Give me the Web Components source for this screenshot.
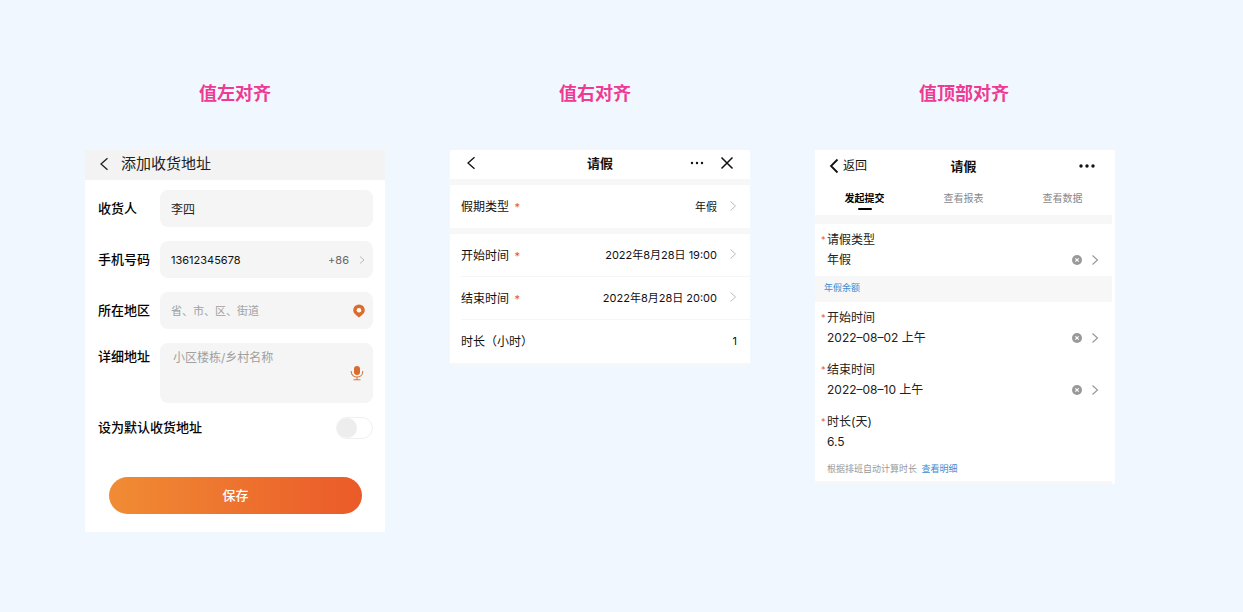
<!DOCTYPE html>
<html lang="zh-CN">
<head>
<meta charset="utf-8">
<meta name="viewport" content="width=device-width, initial-scale=1">
<title>表单值对齐方式</title>
<style>
  body { margin: 0; min-height: 100vh; background: #f0f7ff; font-family: Inter, "Noto Sans CJK SC", sans-serif; color: #222; }
</style>
</head>
<body>
<align-board></align-board>

<script>
const CONTROL_RESET = `
  *, *::before, *::after { box-sizing: border-box; }
  button, input, textarea { font: inherit; color: inherit; border: 0; margin: 0; padding: 0; background: none; }
  button { cursor: pointer; text-align: inherit; }
  svg { display: block; fill: none; stroke: currentColor; }
  h2 { margin: 0; }
  a { color: inherit; text-decoration: none; }
`;

class BaseElement extends HTMLElement {
  constructor() {
    super();
    this.attachShadow({ mode: "open" });
  }
  connectedCallback() {
    this.shadowRoot.innerHTML = `<style>${CONTROL_RESET}${this.styles()}</style>${this.markup()}`;
  }
  attr(name) { return this.getAttribute(name) || ""; }
  styles() { return ""; }
  markup() { return ""; }
}

/* Line icons, coloured by the current text colour */
const ICONS = {
  "back": [10, 14, `<path d="M8.500 1.200 2 7l6.500 5.800" stroke-width="1.300"/>`],
  "back-bold": [10, 16, `<path d="M8.500 1.500 2 8l6.500 6.500" stroke-width="1.800"/>`],
  "next": [8, 12, `<path d="m1.500 1.500 5 4.500-5 4.500" stroke-width="1"/>`],
  "next-small": [6, 10, `<path d="m1 1.500 4 3.500-4 3.500" stroke-width="1"/>`],
  "next-bold": [8, 12, `<path d="m1.500 1.500 5 4.500-5 4.500" stroke-width="1.200"/>`],
  "more": [14, 4, `<g fill="currentColor" stroke="none"><circle cx="2" cy="2" r="1.200"/><circle cx="7" cy="2" r="1.200"/><circle cx="12" cy="2" r="1.200"/></g>`],
  "more-bold": [20, 4, `<g fill="currentColor" stroke="none"><circle cx="3" cy="2" r="1.700"/><circle cx="9" cy="2" r="1.700"/><circle cx="15" cy="2" r="1.700"/></g>`],
  "close": [14, 14, `<path d="m1.500 1.500 11 11m0-11-11 11" stroke-width="1.500"/>`],
  "clear": [10, 10, `<circle cx="5" cy="5" r="5" fill="#999" stroke="none"/><path d="m3.300 3.300 3.400 3.400m0-3.400L3.300 6.700" stroke="#fff" stroke-width="1.100"/>`],
  "pin": [12, 14, `<path d="M6 13.500C4.500 11.800.2 9.800.2 6.200a5.800 5.800 0 0 1 11.600 0c0 3.600-4.300 5.600-5.800 7.300Z" fill="#dd6b2c" stroke="none"/><circle cx="6" cy="6.300" r="2.300" fill="#fff" stroke="none"/>`],
  "mic": [14, 16, `<rect x="4" y="1" width="6" height="9" rx="3" fill="#d96c2f" stroke="none"/><path d="M1.300 6v1c0 3 2.500 5 5.700 5s5.700-2 5.700-5V6M7 12v2.500M3.500 14.700h7" stroke="#d9783f" stroke-width="1.100"/>`]
};
customElements.define("line-icon", class extends BaseElement {
  styles() { return `:host { display: block; flex: none; }`; }
  markup() {
    const [w, h, body] = ICONS[this.attr("name")];
    return `<svg width="${w}" height="${h}" viewBox="0 0 ${w} ${h}" aria-hidden="true">${body}</svg>`;
  }
});

customElements.define("phone-screen", class extends BaseElement {
  styles() { return `:host { display: block; background: #fff; min-width: 0; }`; }
  markup() { return `<slot></slot>`; }
});

/* Grey band between groups of rows */
customElements.define("group-band", class extends BaseElement {
  styles() { return `
    :host { display: block; height: 6px; background: #f7f7f7; }
    :host([size="large"]) { height: 9px; }
    :host([size="small"]) { height: 3px; }`; }
});

/* Row with the label in front and the filled box behind */
customElements.define("boxed-field", class extends BaseElement {
  styles() { return `
    :host { display: grid; grid-template-columns: 62px minmax(0, 1fr); align-items: center; }
    :host([multiline]) { align-items: start; }
    label { padding-bottom: 2px; font-size: 13px; font-weight: 500; line-height: 26px; color: #000; }
    .box { display: flex; align-items: center; height: 37px; padding: 0 8px 0 11px; border-radius: 8px; background: #f5f5f5; }
    :host([multiline]) .box { height: 60px; padding: 0 9px 0 13px; }
    input, textarea { flex: 1; min-width: 0; outline: 0; font-size: 12px; resize: none; }
    input[type="tel"] { font-size: 11px; color: #111; }
    textarea { height: 60px; padding-top: 5px; line-height: 20px; }
    ::placeholder { color: #a0a0a0; opacity: 1; }
    input::placeholder { font-size: 11px; }
  `; }
  markup() {
    const control = this.hasAttribute("multiline")
      ? `<textarea id="c" placeholder="${this.attr("placeholder")}"></textarea>`
      : `<input id="c" type="${this.attr("type") || "text"}" value="${this.attr("value")}" placeholder="${this.attr("placeholder")}">`;
    return `<label for="c">${this.attr("label")}</label><div class="box">${control}<slot></slot></div>`;
  }
});

customElements.define("toggle-field", class extends BaseElement {
  styles() { return `
    :host { display: flex; align-items: center; justify-content: space-between; }
    label { padding-bottom: 2px; font-size: 13px; font-weight: 500; line-height: 20px; color: #000; }
    input { appearance: none; width: 37px; height: 22px; border: 1px solid #f0f0f0; border-radius: 11px; background: #fff; cursor: pointer; }
    input::before { content: ""; display: block; width: 20px; height: 20px; border-radius: 10px; background: #ededed; }
    input:checked { background: #ec6a2c; }
    input:checked::before { margin-left: auto; }
  `; }
  markup() { return `<label for="c">${this.attr("label")}</label><input id="c" type="checkbox" role="switch">`; }
});

customElements.define("address-form", class extends BaseElement {
  styles() { return `
    :host { display: block; }
    header { display: flex; align-items: center; gap: 12px; height: 30px; padding: 0 14px 3px; background: #f3f3f3; }
    h2 { font-size: 15px; font-weight: 400; line-height: 27px; }
    form { display: flex; flex-direction: column; gap: 14px; padding: 10px 12px 18px 13px; }
    .code { display: flex; align-items: center; gap: 10px; font-size: 11px; color: #666; }
    .code line-icon { color: #bbb; }
    .save { height: 37px; margin: 24px 11px 0; padding-bottom: 2px; border-radius: 19px; background: linear-gradient(90deg, #f08c34, #eb5a29); color: #fff; font-size: 13px; font-weight: 500; text-align: center; }
  `; }
  markup() { return `
    <phone-screen>
      <header><button aria-label="返回"><line-icon name="back"></line-icon></button><h2>添加收货地址</h2></header>
      <form onsubmit="return false">
        <boxed-field label="收货人" value="李四"></boxed-field>
        <boxed-field label="手机号码" type="tel" value="13612345678"><button type="button" class="code">+86<line-icon name="next-small"></line-icon></button></boxed-field>
        <boxed-field label="所在地区" placeholder="省、市、区、街道"><button type="button" aria-label="定位"><line-icon name="pin"></line-icon></button></boxed-field>
        <boxed-field label="详细地址" placeholder="小区楼栋/乡村名称" multiline><button type="button" aria-label="语音输入"><line-icon name="mic"></line-icon></button></boxed-field>
        <toggle-field label="设为默认收货地址"></toggle-field>
        <button class="save">保存</button>
      </form>
    </phone-screen>`; }
});

/* Row with the value pushed to the right edge */
customElements.define("inline-field", class extends BaseElement {
  styles() { return `
    :host { display: flex; align-items: center; justify-content: space-between; box-sizing: border-box; height: 43px; margin-left: 11px; padding: 0 13px 2px 0; color: #111; }
    :host([divided]) { border-bottom: 1px solid #f5f5f5; }
    .label { font-size: 12px; }
    .required { margin-left: 2px; color: #e5533d; font-size: 11px; }
    button, output { display: flex; align-items: center; gap: 12px; font-size: 11px; }
    line-icon { color: #bbb; }
  `; }
  markup() {
    const star = this.hasAttribute("required") ? ` <span class="required">*</span>` : "";
    const value = this.hasAttribute("readonly")
      ? `<output aria-labelledby="l">${this.attr("value")}</output>`
      : `<button type="button" aria-labelledby="l v"><span id="v">${this.attr("value")}</span><line-icon name="next"></line-icon></button>`;
    return `<span class="label" id="l">${this.attr("label")}${star}</span>${value}`;
  }
});

customElements.define("leave-inline", class extends BaseElement {
  styles() { return `
    :host { display: block; }
    header { display: grid; grid-template-columns: 1fr auto 1fr; align-items: center; height: 29px; padding: 0 16px 3px; color: #111; }
    h2 { font-size: 13px; font-weight: 700; line-height: 26px; }
    .tools { display: flex; justify-content: flex-end; align-items: center; gap: 16px; }
  `; }
  markup() { return `
    <phone-screen>
      <header>
        <button aria-label="返回"><line-icon name="back"></line-icon></button>
        <h2>请假</h2>
        <div class="tools"><button aria-label="更多"><line-icon name="more"></line-icon></button><button aria-label="关闭"><line-icon name="close"></line-icon></button></div>
      </header>
      <group-band></group-band>
      <inline-field label="假期类型" value="年假" required></inline-field>
      <group-band></group-band>
      <inline-field label="开始时间" value="2022年8月28日 19:00" required divided></inline-field>
      <inline-field label="结束时间" value="2022年8月28日 20:00" required divided></inline-field>
      <inline-field label="时长（小时）" value="1" readonly></inline-field>
      <group-band size="small"></group-band>
    </phone-screen>`; }
});

/* Row with the label on top of the value */
customElements.define("stacked-field", class extends BaseElement {
  styles() { return `
    :host { display: block; padding: 6px 13px 6px 6px; font-size: 12px; line-height: 20px; color: #222; }
    .label { display: grid; grid-template-columns: 6px 1fr; }
    .required { color: #e5533d; font-size: 9px; }
    .value { display: flex; align-items: center; gap: 9px; padding-left: 6px; height: 20px; }
    .pick { flex: 1; }
    .open { color: #999; }
  `; }
  markup() {
    const body = this.hasAttribute("readonly")
      ? `<output aria-labelledby="l">${this.attr("value")}</output>`
      : `<button type="button" class="pick" id="v" aria-labelledby="l v">${this.attr("value")}</button>
         <button type="button" aria-label="清除"><line-icon name="clear"></line-icon></button>
         <button type="button" class="open" aria-label="选择"><line-icon name="next-bold"></line-icon></button>`;
    return `<div class="label"><span class="required">*</span><span id="l">${this.attr("label")}</span></div><div class="value">${body}</div>`;
  }
});

customElements.define("leave-stacked", class extends BaseElement {
  styles() { return `
    :host { display: block; }
    .content { margin-right: 3px; }
    header { display: grid; grid-template-columns: 1fr auto 1fr; align-items: center; height: 33px; padding: 0 14px 1px; color: #111; }
    .back { display: flex; align-items: center; gap: 4px; font-size: 12px; line-height: 20px; }
    h2 { font-size: 13px; font-weight: 700; line-height: 20px; }
    .more { justify-self: end; }
    nav { display: grid; grid-template-columns: repeat(3, 1fr); height: 32px; padding-top: 5px; font-size: 10px; line-height: 20px; color: #888; }
    nav a { display: flex; flex-direction: column; align-items: center; }
    nav a[aria-current] { color: #000; font-weight: 700; }
    nav a[aria-current]::after { content: ""; width: 14px; height: 2px; border-radius: 1px; background: #000; }
    .balance { height: 26px; padding-left: 9px; background: #f7f7f7; font-size: 9px; line-height: 24px; }
    a.link { color: #3d8bd0; }
    .note { margin: 0; padding: 1px 0 2px 12px; font-size: 9px; line-height: 20px; color: #999; }
    .note a { margin-left: 2px; }
  `; }
  markup() { return `
    <phone-screen>
      <div class="content">
        <header>
          <button class="back"><line-icon name="back-bold"></line-icon>返回</button>
          <h2>请假</h2>
          <button class="more" aria-label="更多"><line-icon name="more-bold"></line-icon></button>
        </header>
        <nav><a href="#submit" aria-current="page">发起提交</a><a href="#report">查看报表</a><a href="#data">查看数据</a></nav>
        <group-band size="large"></group-band>
        <stacked-field label="请假类型" value="年假"></stacked-field>
        <div class="balance"><a class="link" href="#balance">年假余额</a></div>
        <stacked-field label="开始时间" value="2022–08–02 上午"></stacked-field>
        <stacked-field label="结束时间" value="2022–08–10 上午"></stacked-field>
        <stacked-field label="时长(天)" value="6.5" readonly></stacked-field>
        <p class="note">根据排班自动计算时长 <a class="link" href="#detail">查看明细</a></p>
        <group-band size="small"></group-band>
      </div>
    </phone-screen>`; }
});

customElements.define("align-board", class extends BaseElement {
  styles() { return `
    :host { display: block; padding: 81px 0 79px; }
    .titles { display: grid; grid-template-columns: repeat(3, minmax(0, 1fr)); gap: 240px; padding: 0 204px 0 199px; color: #ee3a93; }
    .titles h2 { font-size: 18px; font-weight: 700; line-height: 26px; white-space: nowrap; }
    .screens { display: grid; grid-template-columns: repeat(3, minmax(0, 1fr)); gap: 65px; align-items: start; padding: 43px 128px 0 85px; }
  `; }
  markup() { return `
    <div class="titles"><h2>值左对齐</h2><h2>值右对齐</h2><h2>值顶部对齐</h2></div>
    <main class="screens">
      <address-form></address-form>
      <leave-inline></leave-inline>
      <leave-stacked></leave-stacked>
    </main>`; }
});
</script>
</body>
</html>
